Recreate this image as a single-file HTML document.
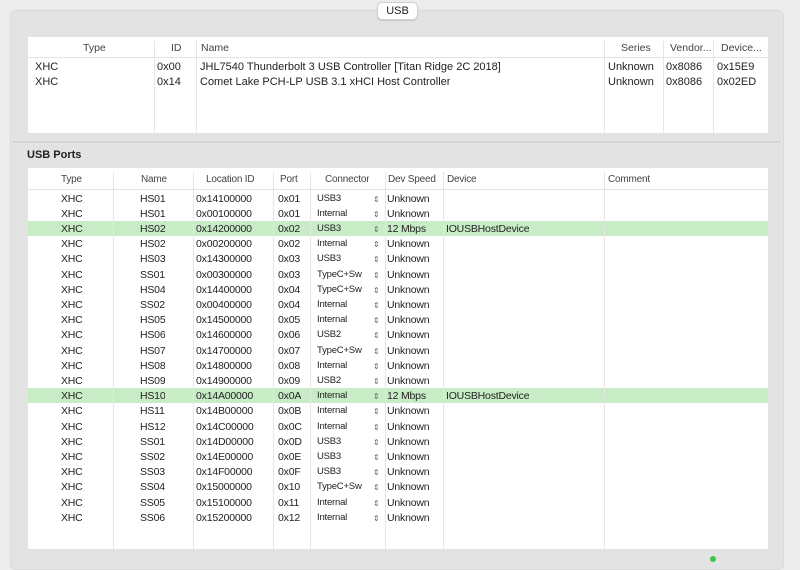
<!DOCTYPE html>
<html><head><meta charset="utf-8"><style>
*{margin:0;padding:0;box-sizing:border-box}
body{width:800px;height:559px;background:#ececec;font-family:"Liberation Sans",sans-serif;color:#222;position:relative;overflow:hidden}
.panel{position:absolute;left:10px;top:10px;width:774px;height:560px;background:#e3e3e3;border-radius:6px;border:1px solid #dadada}
.tab{position:absolute;left:377px;top:2px;width:41px;height:18px;background:#fff;border:1px solid #cfcfcf;border-radius:5px;font-size:11px;text-align:center;line-height:16px;box-shadow:0 1px 1px rgba(0,0,0,.12)}
.tbl{position:absolute;background:#fff}
.hd{position:absolute;left:0;right:0;top:0;border-bottom:1px solid #e4e4e4}
.c{position:absolute;font-size:11px;white-space:nowrap;overflow:hidden}
.vl{position:absolute;width:1px;background:#e6e6e6}
.sep{position:absolute;left:13px;width:768px;top:141px;height:2px;background:#d6d6d6}
.lbl{position:absolute;left:27px;top:149px;font-size:11px;font-weight:bold}
.row{position:absolute;left:0;right:0;height:15px}
.g{background:#c8ecc6}
.r .c{font-size:10.5px;letter-spacing:-0.2px}
.conn{font-size:9.5px!important}
.arr{position:absolute;font-size:8px;color:#666}
.h{color:#444}
</style></head><body>
<div class="panel"></div>
<div class="tab">USB</div>

<div class="tbl" style="left:28px;top:37px;width:740px;height:96px">
 <div class="hd" style="height:21px"></div>
 <div class="vl" style="left:126px;top:4px;height:92px"></div>
 <div class="vl" style="left:168px;top:4px;height:92px"></div>
 <div class="vl" style="left:576px;top:4px;height:92px"></div>
 <div class="vl" style="left:635px;top:4px;height:92px"></div>
 <div class="vl" style="left:685px;top:4px;height:92px"></div>
 <div class="c h" style="left:55px;top:5px;font-size:10.5px">Type</div>
 <div class="c h" style="left:143px;top:5px;font-size:10.5px">ID</div>
 <div class="c h" style="left:173px;top:5px;font-size:10.5px">Name</div>
 <div class="c h" style="left:593px;top:5px;font-size:10.5px">Series</div>
 <div class="c h" style="left:642px;top:5px;font-size:10.5px">Vendor...</div>
 <div class="c h" style="left:693px;top:5px;font-size:10.5px">Device...</div>
 <div class="c" style="left:7px;top:24px">XHC</div><div class="c" style="left:129px;top:24px">0x00</div><div class="c" style="left:172px;top:24px">JHL7540 Thunderbolt 3 USB Controller [Titan Ridge 2C 2018]</div><div class="c" style="left:580px;top:24px">Unknown</div><div class="c" style="left:638px;top:24px">0x8086</div><div class="c" style="left:689px;top:24px">0x15E9</div>
 <div class="c" style="left:7px;top:39px">XHC</div><div class="c" style="left:129px;top:39px">0x14</div><div class="c" style="left:172px;top:39px">Comet Lake PCH-LP USB 3.1 xHCI Host Controller</div><div class="c" style="left:580px;top:39px">Unknown</div><div class="c" style="left:638px;top:39px">0x8086</div><div class="c" style="left:689px;top:39px">0x02ED</div>
</div>

<div class="sep"></div>
<div class="lbl">USB Ports</div>

<div class="tbl r" id="p" style="left:28px;top:168px;width:740px;height:381px">
 <div class="hd" style="height:22px"></div>
 <div class="c h" style="left:33px;top:6px;font-size:10px">Type</div>
 <div class="c h" style="left:113px;top:6px;font-size:10px">Name</div>
 <div class="c h" style="left:178px;top:6px;font-size:10px">Location ID</div>
 <div class="c h" style="left:252px;top:6px;font-size:10px">Port</div>
 <div class="c h" style="left:297px;top:6px;font-size:10px">Connector</div>
 <div class="c h" style="left:360px;top:6px;font-size:10px">Dev Speed</div>
 <div class="c h" style="left:419px;top:6px;font-size:10px">Device</div>
 <div class="c h" style="left:580px;top:6px;font-size:10px">Comment</div>
</div>
<script>
var rows=[["HS01","0x14100000","0x01","USB3","Unknown",""],["HS01","0x00100000","0x01","Internal","Unknown",""],["HS02","0x14200000","0x02","USB3","12 Mbps","IOUSBHostDevice"],["HS02","0x00200000","0x02","Internal","Unknown",""],["HS03","0x14300000","0x03","USB3","Unknown",""],["SS01","0x00300000","0x03","TypeC+Sw","Unknown",""],["HS04","0x14400000","0x04","TypeC+Sw","Unknown",""],["SS02","0x00400000","0x04","Internal","Unknown",""],["HS05","0x14500000","0x05","Internal","Unknown",""],["HS06","0x14600000","0x06","USB2","Unknown",""],["HS07","0x14700000","0x07","TypeC+Sw","Unknown",""],["HS08","0x14800000","0x08","Internal","Unknown",""],["HS09","0x14900000","0x09","USB2","Unknown",""],["HS10","0x14A00000","0x0A","Internal","12 Mbps","IOUSBHostDevice"],["HS11","0x14B00000","0x0B","Internal","Unknown",""],["HS12","0x14C00000","0x0C","Internal","Unknown",""],["SS01","0x14D00000","0x0D","USB3","Unknown",""],["SS02","0x14E00000","0x0E","USB3","Unknown",""],["SS03","0x14F00000","0x0F","USB3","Unknown",""],["SS04","0x15000000","0x10","TypeC+Sw","Unknown",""],["SS05","0x15100000","0x11","Internal","Unknown",""],["SS06","0x15200000","0x12","Internal","Unknown",""]];
var p=document.getElementById('p'),h='';
var vx=[85,165,245,282,357,415,576];
rows.forEach(function(r,i){var t=23+i*15.2;
 if(r[5])h+='<div class="row g" style="top:'+(t-0.5)+'px"></div>';
});
vx.forEach(function(x){h+='<div class="vl" style="left:'+x+'px;top:4px;height:377px"></div>';});
rows.forEach(function(r,i){var t=24.5+i*15.2;
 h+='<div class="c" style="left:33px;top:'+t+'px">XHC</div>';
 h+='<div class="c" style="left:112px;top:'+t+'px">'+r[0]+'</div>';
 h+='<div class="c" style="left:168px;top:'+t+'px">'+r[1]+'</div>';
 h+='<div class="c" style="left:250px;top:'+t+'px">'+r[2]+'</div>';
 h+='<div class="c conn" style="left:289px;top:'+(t)+'px">'+r[3]+'</div>';
 h+='<div class="arr" style="left:345px;top:'+(t+2)+'px">&#8661;</div>';
 h+='<div class="c" style="left:359px;top:'+t+'px">'+r[4]+'</div>';
 h+='<div class="c" style="left:418px;top:'+t+'px">'+r[5]+'</div>';
});
p.insertAdjacentHTML('beforeend',h);
</script>
<div style="position:absolute;left:710px;top:556px;width:6px;height:6px;border-radius:3px;background:#3cc84a"></div>
</body></html>
